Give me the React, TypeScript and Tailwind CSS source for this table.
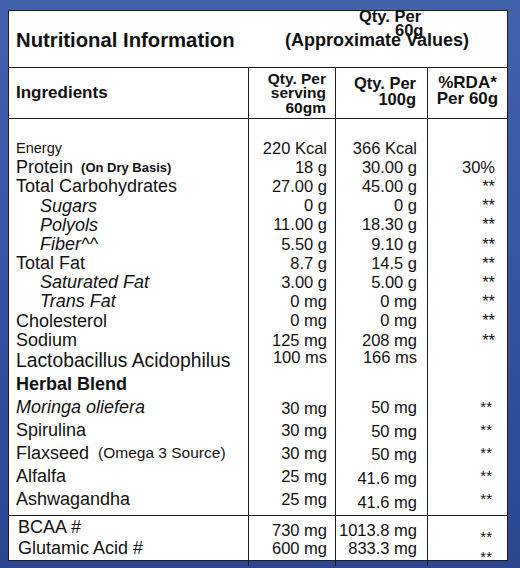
import React from 'react';

const font = "font-['Liberation_Sans',Arial,Helvetica,sans-serif]";
const row = 'flex items-center whitespace-nowrap';

type Cell = { text?: React.ReactNode; h: string; cls?: string };

const labels: Cell[] = [
  { text: 'Energy', h: 'h-[19.2px]', cls: 'text-[14.5px]' },
  {
    text: (
      <>
        Protein<span className="ml-2 text-[13px] font-bold">(On Dry Basis)</span>
      </>
    ),
    h: 'h-[19.2px]',
  },
  { text: 'Total Carbohydrates', h: 'h-[19.2px]' },
  { text: 'Sugars', h: 'h-[19.2px]', cls: 'pl-6 italic' },
  { text: 'Polyols', h: 'h-[19.2px]', cls: 'pl-6 italic' },
  { text: 'Fiber^^', h: 'h-[19.2px]', cls: 'pl-6 italic' },
  { text: 'Total Fat', h: 'h-[19.2px]' },
  { text: 'Saturated Fat', h: 'h-[19.2px]', cls: 'pl-6 italic' },
  { text: 'Trans Fat', h: 'h-[19.2px]', cls: 'pl-6 italic' },
  { text: 'Cholesterol', h: 'h-[19.2px]' },
  { text: 'Sodium', h: 'h-[19.2px]' },
  { text: 'Lactobacillus Acidophilus', h: 'h-[23px]', cls: 'text-[19.3px]' },
  { text: 'Herbal Blend', h: 'h-[23px]', cls: 'font-bold' },
  { text: 'Moringa oliefera', h: 'h-[23px]', cls: 'italic' },
  { text: 'Spirulina', h: 'h-[23px]' },
  {
    text: (
      <>
        Flaxseed<span className="ml-[9px] text-[15.5px]">(Omega 3 Source)</span>
      </>
    ),
    h: 'h-[23px]',
  },
  { text: 'Alfalfa', h: 'h-[23px]' },
  { text: 'Ashwagandha', h: 'h-[23px]' },
];

const perServing: Cell[] = [
  { text: '220 Kcal', h: 'h-[19.2px]' },
  { text: '18 g', h: 'h-[19.2px]' },
  { text: '27.00 g', h: 'h-[19.2px]' },
  { text: '0 g', h: 'h-[19.2px]' },
  { text: '11.00 g', h: 'h-[19.2px]' },
  { text: '5.50 g', h: 'h-[19.2px]' },
  { text: '8.7 g', h: 'h-[19.2px]' },
  { text: '3.00 g', h: 'h-[19.2px]' },
  { text: '0 mg', h: 'h-[19.2px]' },
  { text: '0 mg', h: 'h-[19.2px]' },
  { text: '125 mg', h: 'h-[19.2px]' },
  { text: '100 ms', h: 'h-[16px]' },
  { h: 'h-[31px]' },
  { text: '30 mg', h: 'h-[22.8px]' },
  { text: '30 mg', h: 'h-[22.8px]' },
  { text: '30 mg', h: 'h-[22.8px]' },
  { text: '25 mg', h: 'h-[22.8px]' },
  { text: '25 mg', h: 'h-[22.8px]' },
];

const per100: Cell[] = [
  { text: '366 Kcal', h: 'h-[19.2px]' },
  { text: '30.00 g', h: 'h-[19.2px]' },
  { text: '45.00 g', h: 'h-[19.2px]' },
  { text: '0 g', h: 'h-[19.2px]' },
  { text: '18.30 g', h: 'h-[19.2px]' },
  { text: '9.10 g', h: 'h-[19.2px]' },
  { text: '14.5 g', h: 'h-[19.2px]' },
  { text: '5.00 g', h: 'h-[19.2px]' },
  { text: '0 mg', h: 'h-[19.2px]' },
  { text: '0 mg', h: 'h-[19.2px]' },
  { text: '208 mg', h: 'h-[19.2px]' },
  { text: '166 ms', h: 'h-[16px]' },
  { h: 'h-[30px]' },
  { text: '50 mg', h: 'h-[24px]' },
  { text: '50 mg', h: 'h-[24px]' },
  { text: '50 mg', h: 'h-[22.5px]' },
  { text: '41.6 mg', h: 'h-[24px]' },
  { text: '41.6 mg', h: 'h-[24px]' },
];

const rda: Cell[] = [
  { h: 'h-[19.2px]' },
  { text: '30%', h: 'h-[19.2px]' },
  ...Array.from({ length: 9 }, () => ({ text: '**', h: 'h-[19.2px]' })),
  { h: 'h-[23px]' },
  { h: 'h-[23px]' },
  ...Array.from({ length: 5 }, () => ({ text: '**', h: 'h-[22.8px]', cls: 'pr-[3px] text-[15px]' })),
];

function Column({ cells, className }: { cells: Cell[]; className: string }) {
  return (
    <div className={className}>
      {cells.map((c, i) => (
        <div key={i} className={`${row} ${c.h} ${c.cls ?? ''}`}>
          {c.text}
        </div>
      ))}
    </div>
  );
}

export default function App() {
  return (
    <div
      className={`w-[520px] h-[568px] pt-[10px] pl-[8px] bg-gradient-to-b from-[#4262ac] to-[#2c4690] ${font} text-[#111]`}
    >
      <div className="relative w-[500px] h-[551px] bg-white border border-[#1c1c1c] flex flex-col">
        {/* title */}
        <div className="shrink-0 h-[57px] border-b border-[#1c1c1c] flex items-center pt-[3px] pl-[7px] pr-[38px]">
          <span className="text-[20.3px] font-bold">Nutritional Information</span>
          <span className="ml-auto text-[18px] font-bold">(Approximate Values)</span>
        </div>
        <div className="absolute left-[350px] top-[-3px] text-[16.5px] leading-[16px] font-bold">Qty. Per</div>
        <div className="absolute left-[386px] top-[11px] text-[16.5px] leading-[16px] font-bold">60g</div>

        {/* column headings */}
        <div className="shrink-0 h-[51px] border-b border-[#1c1c1c] grid grid-cols-[239px_87px_92px_80px] font-bold">
          <div className="flex items-center pl-[7px] text-[17px]">Ingredients</div>
          <div className="border-l border-[#1c1c1c] flex items-center justify-end pr-[9px] pt-[1px] text-[15.5px] leading-[14.5px] text-right">
            <div>
              Qty. Per
              <br />
              serving
              <br />
              60gm
            </div>
          </div>
          <div className="border-l border-[#1c1c1c] flex items-center justify-end pr-[11px] pb-[3px] text-[16.5px] leading-[15.5px] text-right">
            <div>
              Qty. Per
              <br />
              100g
            </div>
          </div>
          <div className="border-l border-[#1c1c1c] flex items-center justify-center pb-[4px] text-[17px] leading-[16px] text-center">
            <div>
              %RDA*
              <br />
              Per 60g
            </div>
          </div>
        </div>

        {/* body */}
        <div className="shrink-0 h-[397px] border-b border-[#1c1c1c] grid grid-cols-[239px_87px_92px_80px] leading-none">
          <Column cells={labels} className="pt-[19.4px] pl-[7px] text-[18px]" />
          <Column
            cells={perServing}
            className="border-l border-[#1c1c1c] pt-[19.4px] pr-[8px] text-[16.5px] [&>div]:justify-end"
          />
          <Column
            cells={per100}
            className="border-l border-[#1c1c1c] pt-[19.4px] pr-[10px] text-[16.5px] [&>div]:justify-end"
          />
          <Column
            cells={rda}
            className="border-l border-[#1c1c1c] pt-[19.4px] pr-[12px] text-[16.5px] [&>div]:justify-end"
          />
        </div>

        {/* amino acids */}
        <div className="shrink-0 h-[44px] grid grid-cols-[239px_87px_92px_80px] leading-none">
          <div className="pt-[1px] pl-[9px] text-[18px]">
            <div className={`${row} h-[20px]`}>BCAA #</div>
            <div className={`${row} h-[21px]`}>Glutamic Acid #</div>
          </div>
          <div className="border-l border-[#1c1c1c] pt-[5px] pr-[8px] text-[16.5px]">
            <div className={`${row} h-[19px] justify-end`}>730 mg</div>
            <div className={`${row} h-[17px] justify-end`}>600 mg</div>
          </div>
          <div className="border-l border-[#1c1c1c] pt-[5px] pr-[10px] text-[16.5px]">
            <div className={`${row} h-[19px] justify-end`}>1013.8 mg</div>
            <div className={`${row} h-[17px] justify-end`}>833.3 mg</div>
          </div>
          <div className="border-l border-[#1c1c1c] pt-[11px] pr-[15px] text-[15px]">
            <div className={`${row} h-[19px] justify-end`}>**</div>
            <div className={`${row} h-[20px] justify-end`}>**</div>
          </div>
        </div>
      </div>
    </div>
  );
}
